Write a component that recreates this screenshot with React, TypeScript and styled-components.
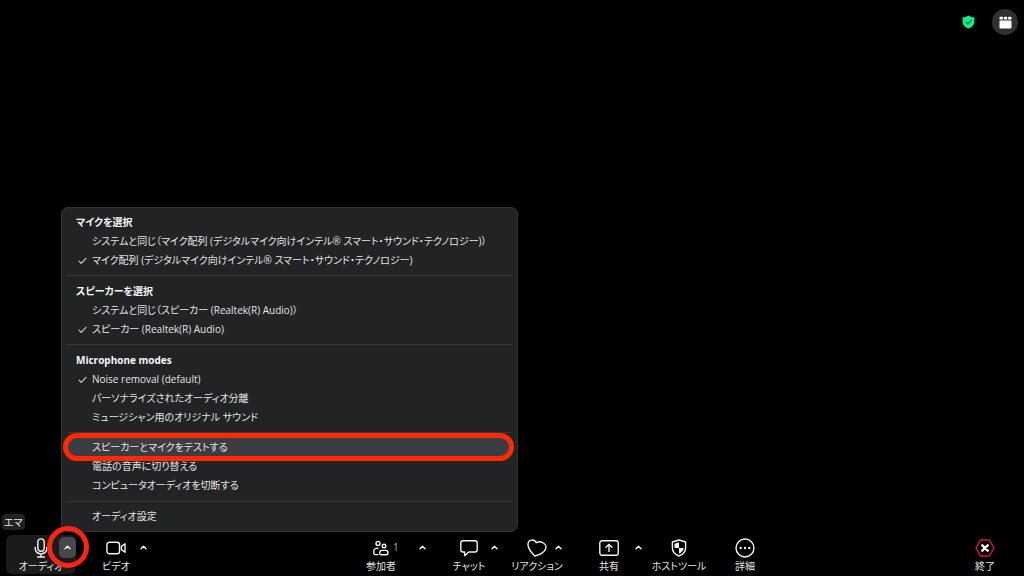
import React from "react";
import styled, { createGlobalStyle } from "styled-components";

const GlobalStyle = createGlobalStyle`
  *, *::before, *::after { box-sizing: border-box; }
  html, body { margin: 0; background: #000; }
  body, button {
    font-family: "Open Sans", "Noto Sans CJK JP", sans-serif;
    font-feature-settings: "palt";
  }
  button { margin: 0; padding: 0; border: 0; background: none; color: inherit; text-align: left; }
`;

const Page = styled.div`
  display: flex;
  flex-direction: column;
  min-height: 100vh;
  background: #000;
  color: #e4e4e4;
`;

const Stage = styled.main`
  position: relative;
  display: flex;
  flex-direction: column;
  justify-content: space-between;
  flex: 1;
`;

const TopBar = styled.header`
  display: flex;
  justify-content: flex-end;
  align-items: center;
  gap: 17px;
  padding: 9px 6px;
`;

const StatusButton = styled.button`
  display: flex;
`;

const ViewButton = styled.button`
  display: flex;
  align-items: center;
  justify-content: center;
  width: 26px;
  height: 26px;
  border-radius: 50%;
  background: #303034;
`;

const NameTag = styled.span`
  align-self: flex-start;
  margin: 0 0 2px 2px;
  padding: 0 2px;
  border-radius: 4px;
  background: #222;
  font-size: 10px;
  line-height: 16px;
`;

const Menu = styled.div`
  position: absolute;
  left: 61px;
  bottom: 0;
  width: 457px;
  max-width: calc(100% - 61px);
  padding: 4px 5px 5px;
  border: 1px solid #343537;
  border-radius: 7px;
  background: #222325;
`;

const Section = styled.section<{ $titled: boolean }>`
  padding-bottom: ${(p) => (p.$titled ? "5px" : "6px")};

  &:last-child {
    padding-bottom: 0;
  }

  & + & {
    padding-top: 5px;
    border-top: 1px solid #37383a;
  }
`;

const SectionTitle = styled.h2`
  margin: 0;
  padding: 1px 0 0 9px;
  color: #f7f7f7;
  font-size: 10px;
  font-weight: 700;
  line-height: 19px;
`;

const MenuItem = styled.button<{ $active?: boolean }>`
  position: relative;
  display: grid;
  grid-template-columns: 14px 1fr;
  align-items: center;
  width: 100%;
  height: 19px;
  padding-left: 11px;
  border-radius: 9px;
  background: ${(p) => (p.$active ? "#3c3d42" : "transparent")};
  font-size: 10px;
  line-height: 19px;
  white-space: nowrap;
`;

const ItemText = styled.span`
  grid-column: 2;
`;

const ItemOutline = styled.span`
  position: absolute;
  inset: -5px -2px -4px -4px;
  border: 5px solid #ff2a00;
  border-radius: 14px;
`;

const Toolbar = styled.footer`
  display: flex;
  justify-content: space-between;
  padding: 3px 12px 2px 6px;
`;

const ToolGroup = styled.div`
  display: flex;
  gap: 4px;
`;

const Tool = styled.div<{ $width: number; $open?: boolean }>`
  position: relative;
  width: ${(p) => p.$width}px;
  height: 39px;
  border-radius: 6px;
  background: ${(p) => (p.$open ? "#1b1b1b" : "transparent")};
`;

const ToolButton = styled.button`
  display: flex;
  flex-direction: column;
  align-items: center;
  width: 100%;
`;

const ToolIcon = styled.span`
  position: relative;
  display: flex;
  align-items: center;
  height: 25px;
`;

const ToolLabel = styled.span`
  font-size: 10px;
  line-height: 12px;
  white-space: nowrap;
`;

const Count = styled.span`
  position: absolute;
  top: 5px;
  left: 100%;
  margin-left: 4px;
  color: #b5b5b5;
  font-size: 10px;
  line-height: 14px;
`;

const Caret = styled.button<{ $open?: boolean }>`
  position: absolute;
  top: 2px;
  right: 0;
  display: flex;
  align-items: center;
  justify-content: center;
  width: 17px;
  height: 21px;
  border-radius: 5px;
  background: ${(p) => (p.$open ? "#474747" : "transparent")};
`;

const CaretRing = styled.span`
  position: absolute;
  top: -9px;
  right: -13px;
  width: 42px;
  height: 42px;
  border: 5px solid #ff2410;
  border-radius: 50%;
  pointer-events: none;
`;

const stroke = {
  fill: "none",
  stroke: "#f2f2f2",
  strokeWidth: 1.4,
  strokeLinecap: "round" as const,
  strokeLinejoin: "round" as const,
};

const MicIcon = () => (
  <svg width="14" height="20" viewBox="0 0 14 20" {...stroke}>
    <rect x="3.8" y="0.9" width="6.4" height="12.4" rx="3.2" />
    <path d="M1.2 9.5v1.2a5.8 5.2 0 0 0 11.6 0V9.5M7 16v3M3.6 19h6.8" />
  </svg>
);

const VideoIcon = () => (
  <svg width="20" height="14" viewBox="0 0 20 14" {...stroke}>
    <rect x="0.9" y="1.2" width="12.6" height="11.6" rx="2.6" />
    <path d="M15.4 5.4l3.6-2.6v8.4l-3.6-2.6z" />
  </svg>
);

const PeopleIcon = () => (
  <svg width="16" height="16" viewBox="0 0 16 16" {...stroke}>
    <circle cx="5" cy="3.4" r="2" />
    <circle cx="11" cy="6" r="1.8" />
    <path d="M5 14.6H2.4C1.4 14.6.8 14 .8 13v-1.8C.8 9.2 2.2 8.1 5.2 8.1" />
    <path d="M8.8 10.4h4c1.4 0 2.2 1 2.2 2.3s-.8 2-1.8 2H8.4c-1 0-1.7-.8-1.7-2 0-1.3.8-2.3 2.1-2.3z" />
  </svg>
);

const ChatIcon = () => (
  <svg width="18" height="18" viewBox="0 0 18 18" {...stroke}>
    <path d="M3 1.8h12c1.3 0 2.2.9 2.2 2.2v6.8c0 1.3-.9 2.2-2.2 2.2H8.8l-4.2 3.6V13H3c-1.3 0-2.2-.9-2.2-2.2V4c0-1.3.9-2.2 2.2-2.2z" />
  </svg>
);

const HeartIcon = () => (
  <svg width="20" height="18" viewBox="0 0 20 18" {...stroke}>
    <path d="M7.8 17C4.5 13.8 1.4 9.6 1 6.2.7 3.3 2.3 1.3 4.6 1.1c2-.2 3.7.8 4.6 2.7 1.7-1.2 4-1.3 5.9-.5 2.9 1.2 4.5 4 3.6 6.400C17.6 12.9 12.6 15.7 7.8 17z" />
  </svg>
);

const ShareIcon = () => (
  <svg width="20" height="16" viewBox="0 0 20 16" {...stroke}>
    <rect x="0.8" y="0.8" width="18.4" height="14.4" rx="2.2" />
    <path d="M10 11.6V4.4M7 7.2l3-2.9 3 2.9" />
  </svg>
);

const HostShieldIcon = () => (
  <svg width="16" height="18" viewBox="0 0 16 18" {...stroke}>
    <path d="M8 1l6.6 2v6c0 3.6-3 6.6-6.6 8-3.6-1.4-6.6-4.4-6.6-8V3z" />
    <path d="M8 3.3L3.5 4.7V9H8zM8 9h4.6c0 2.4-2 4.6-4.6 5.7z" fill="#f2f2f2" stroke="none" />
  </svg>
);

const MoreIcon = () => (
  <svg width="20" height="20" viewBox="0 0 20 20" {...stroke}>
    <circle cx="10" cy="10" r="9" />
    <g fill="#f2f2f2" stroke="none">
      <circle cx="5.7" cy="10" r="1.2" />
      <circle cx="10" cy="10" r="1.2" />
      <circle cx="14.3" cy="10" r="1.2" />
    </g>
  </svg>
);

const EndIcon = () => (
  <svg width="20" height="18" viewBox="0 0 20 18" fill="none" strokeLinejoin="round" strokeLinecap="round">
    <path d="M5.6 1h8.8L19 9l-4.6 8H5.6L1 9z" stroke="#d8104a" strokeWidth="1.5" />
    <path d="M7.3 6.3l5.4 5.4M12.7 6.3l-5.4 5.4" stroke="#fff" strokeWidth="2.4" />
  </svg>
);

const CaretIcon = () => (
  <svg width="7" height="5" viewBox="0 0 7 5" {...stroke}>
    <path d="M1 3.8l2.5-2.5L6 3.8" />
  </svg>
);

const CheckIcon = () => (
  <svg width="9" height="8" viewBox="0 0 9 8" {...stroke} stroke="#d0d0d0" strokeWidth={1.1}>
    <path d="M1 4.2l2.2 2.2L8 1.4" />
  </svg>
);

const SecureIcon = () => (
  <svg width="13" height="14" viewBox="0 0 13 14">
    <path d="M6.5.4C8.2 1.7 10.2 2.3 12.4 2.4v4.4c0 3.2-2.5 5.5-5.9 6.8C3.1 12.3.6 10 .6 6.8V2.4C2.8 2.3 4.8 1.7 6.5.4z" fill="#00f58a" />
    <path d="M3.8 6.8l2 2 3.6-3.7" fill="none" stroke="#04351f" strokeWidth="1.2" />
  </svg>
);

const GalleryIcon = () => (
  <svg width="13" height="13" viewBox="0 0 13 13" fill="#fff">
    <rect x="0.5" y="0.8" width="3.4" height="2.7" rx="0.6" />
    <rect x="4.8" y="0.8" width="3.4" height="2.7" rx="0.6" />
    <rect x="9.1" y="0.8" width="3.4" height="2.7" rx="0.6" />
    <rect x="0.5" y="4.4" width="12" height="8.2" rx="1" />
  </svg>
);

type Item = { text: string; checked?: boolean; active?: boolean };

const sections: { title?: string; items: Item[] }[] = [
  {
    title: "マイクを選択",
    items: [
      { text: "システムと同じ（マイク配列 (デジタルマイク向けインテル® スマート・サウンド・テクノロジー)）" },
      { text: "マイク配列 (デジタルマイク向けインテル® スマート・サウンド・テクノロジー)", checked: true },
    ],
  },
  {
    title: "スピーカーを選択",
    items: [
      { text: "システムと同じ（スピーカー (Realtek(R) Audio)）" },
      { text: "スピーカー (Realtek(R) Audio)", checked: true },
    ],
  },
  {
    title: "Microphone modes",
    items: [
      { text: "Noise removal (default)", checked: true },
      { text: "パーソナライズされたオーディオ分離" },
      { text: "ミュージシャン用のオリジナル サウンド" },
    ],
  },
  {
    items: [
      { text: "スピーカーとマイクをテストする", active: true },
      { text: "電話の音声に切り替える" },
      { text: "コンピュータオーディオを切断する" },
    ],
  },
  { items: [{ text: "オーディオ設定" }] },
];

type ToolDef = {
  label: string;
  icon: React.ReactNode;
  width: number;
  caret?: boolean;
  open?: boolean;
  count?: number;
};

const toolGroups: ToolDef[][] = [
  [
    { label: "オーディオ", icon: <MicIcon />, width: 70, caret: true, open: true },
    { label: "ビデオ", icon: <VideoIcon />, width: 72, caret: true },
  ],
  [
    { label: "参加者", icon: <PeopleIcon />, width: 100, caret: true, count: 1 },
    { label: "チャット", icon: <ChatIcon />, width: 68, caret: true },
    { label: "リアクション", icon: <HeartIcon />, width: 60, caret: true },
    { label: "共有", icon: <ShareIcon />, width: 76, caret: true },
    { label: "ホストツール", icon: <HostShieldIcon />, width: 56 },
    { label: "詳細", icon: <MoreIcon />, width: 68 },
  ],
  [{ label: "終了", icon: <EndIcon />, width: 54 }],
];

export default function App() {
  return (
    <Page lang="ja">
      <GlobalStyle />
      <Stage>
        <TopBar>
          <StatusButton aria-label="セキュリティ">
            <SecureIcon />
          </StatusButton>
          <ViewButton aria-label="表示">
            <GalleryIcon />
          </ViewButton>
        </TopBar>
        <NameTag>エマ</NameTag>
        <Menu role="menu" aria-label="オーディオ">
          {sections.map((section, i) => (
            <Section key={i} $titled={Boolean(section.title)}>
              {section.title && <SectionTitle>{section.title}</SectionTitle>}
              {section.items.map((item) => (
                <MenuItem key={item.text} role="menuitem" $active={item.active}>
                  {item.checked && <CheckIcon />}
                  <ItemText>{item.text}</ItemText>
                  {item.active && <ItemOutline />}
                </MenuItem>
              ))}
            </Section>
          ))}
        </Menu>
      </Stage>
      <Toolbar>
        {toolGroups.map((group, i) => (
          <ToolGroup key={i}>
            {group.map((tool) => (
              <Tool key={tool.label} $width={tool.width} $open={tool.open}>
                <ToolButton>
                  <ToolIcon>
                    {tool.icon}
                    {tool.count && <Count>{tool.count}</Count>}
                  </ToolIcon>
                  <ToolLabel>{tool.label}</ToolLabel>
                </ToolButton>
                {tool.caret && (
                  <Caret $open={tool.open} aria-label={`${tool.label} メニュー`}>
                    <CaretIcon />
                  </Caret>
                )}
                {tool.open && <CaretRing />}
              </Tool>
            ))}
          </ToolGroup>
        ))}
      </Toolbar>
    </Page>
  );
}
